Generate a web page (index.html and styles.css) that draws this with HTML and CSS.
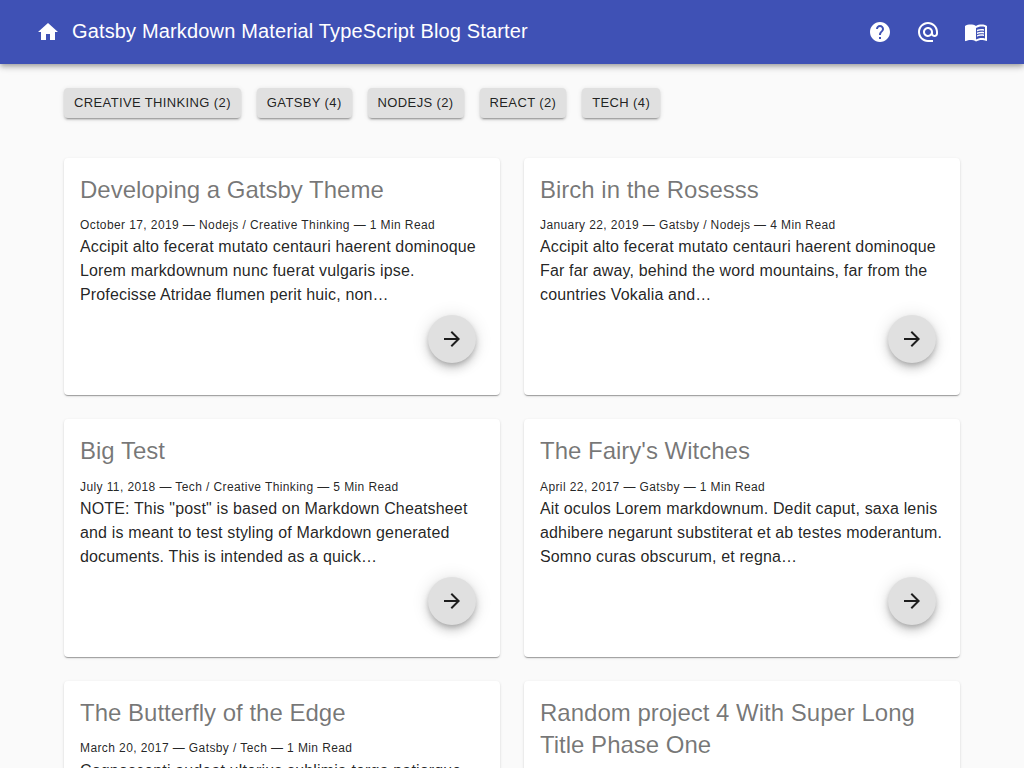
FILE: index.html
```html
<!DOCTYPE html>
<html lang="en">
<head>
<meta charset="utf-8">
<title>Gatsby Markdown Material TypeScript Blog Starter</title>
<link rel="stylesheet" href="styles.css">
</head>
<body>
<header class="bar">
  <a class="home"><svg viewBox="0 0 24 24"><path d="M10 20v-6h4v6h5v-8h3L12 3 2 12h3v8z"/></svg></a>
  <h1 class="brand">Gatsby Markdown Material TypeScript Blog Starter</h1>
  <nav class="actions">
    <svg viewBox="0 0 24 24"><path d="M12 2C6.48 2 2 6.48 2 12s4.48 10 10 10 10-4.48 10-10S17.52 2 12 2zm1 17h-2v-2h2v2zm2.07-7.75l-.9.92C13.45 12.9 13 13.5 13 15h-2v-.5c0-1.1.45-2.1 1.17-2.83l1.24-1.26c.37-.36.59-.86.59-1.41 0-1.1-.9-2-2-2s-2 .9-2 2H8c0-2.21 1.79-4 4-4s4 1.79 4 4c0 .88-.36 1.68-.93 2.25z"/></svg>
    <svg viewBox="0 0 24 24"><path d="M12 1.95c-5.52 0-10 4.48-10 10s4.48 10 10 10h5v-2h-5c-4.34 0-8-3.66-8-8s3.66-8 8-8 8 3.66 8 8v1.43c0 .79-.71 1.57-1.5 1.57s-1.5-.78-1.5-1.57v-1.43c0-2.76-2.24-5-5-5s-5 2.24-5 5 2.24 5 5 5c1.38 0 2.64-.56 3.54-1.47.65.89 1.77 1.47 2.96 1.47 1.97 0 3.5-1.6 3.5-3.57v-1.43c0-5.52-4.48-10-10-10zm0 13c-1.66 0-3-1.34-3-3s1.34-3 3-3 3 1.34 3 3-1.34 3-3 3z"/></svg>
    <svg viewBox="0 0 24 24"><path d="M21 5c-1.11-.35-2.33-.5-3.5-.5-1.95 0-4.05.4-5.5 1.5-1.45-1.1-3.55-1.5-5.5-1.5S2.45 4.9 1 6v14.65c0 .25.25.5.5.5.1 0 .15-.05.25-.05C3.1 20.45 5.05 20 6.5 20c1.95 0 4.05.4 5.5 1.5 1.35-.85 3.8-1.5 5.5-1.5 1.65 0 3.35.3 4.75 1.05.1.05.15.05.25.05.25 0 .5-.25.5-.5V6c-.6-.45-1.25-.75-2-1zm0 13.5c-1.1-.35-2.3-.5-3.5-.5-1.7 0-4.15.65-5.5 1.5V8c1.35-.85 3.8-1.5 5.5-1.5 1.2 0 2.4.15 3.5.5v11.5z"/><path d="M17.5 10.5c.88 0 1.73.09 2.5.26V9.24c-.79-.15-1.64-.24-2.5-.24-1.7 0-3.24.29-4.5.83v1.66c1.13-.64 2.7-.99 4.5-.99zM13 12.49v1.66c1.13-.64 2.7-.99 4.5-.99.88 0 1.73.09 2.5.26V11.9c-.79-.15-1.64-.24-2.5-.24-1.7 0-3.24.3-4.5.83zM17.5 14.33c-1.7 0-3.24.29-4.5.83v1.66c1.13-.64 2.7-.99 4.5-.99.88 0 1.73.09 2.5.26v-1.52c-.79-.16-1.64-.24-2.5-.24z"/></svg>
  </nav>
</header>
<main class="content">
  <div class="tags">
    <a class="tag">Creative Thinking (2)</a><a class="tag">Gatsby (4)</a><a class="tag">Nodejs (2)</a><a class="tag">React (2)</a><a class="tag">Tech (4)</a>
  </div>
  <div class="grid">
    <article class="card"><h2>Developing a Gatsby Theme</h2><p class="meta">October 17, 2019 — Nodejs / Creative Thinking — 1 Min Read</p><p class="text">Accipit alto fecerat mutato centauri haerent dominoque<br>Lorem markdownum nunc fuerat vulgaris ipse.<br>Profecisse Atridae flumen perit huic, non…</p><a class="fab"><svg viewBox="0 0 24 24"><path d="M12 4l-1.41 1.41L16.17 11H4v2h12.17l-5.58 5.59L12 20l8-8z"/></svg></a></article>
    <article class="card"><h2>Birch in the Rosesss</h2><p class="meta">January 22, 2019 — Gatsby / Nodejs — 4 Min Read</p><p class="text">Accipit alto fecerat mutato centauri haerent dominoque<br>Far far away, behind the word mountains, far from the<br>countries Vokalia and…</p><a class="fab"><svg viewBox="0 0 24 24"><path d="M12 4l-1.41 1.41L16.17 11H4v2h12.17l-5.58 5.59L12 20l8-8z"/></svg></a></article>
    <article class="card"><h2>Big Test</h2><p class="meta">July 11, 2018 — Tech / Creative Thinking — 5 Min Read</p><p class="text">NOTE: This "post" is based on Markdown Cheatsheet<br>and is meant to test styling of Markdown generated<br>documents. This is intended as a quick…</p><a class="fab"><svg viewBox="0 0 24 24"><path d="M12 4l-1.41 1.41L16.17 11H4v2h12.17l-5.58 5.59L12 20l8-8z"/></svg></a></article>
    <article class="card"><h2>The Fairy's Witches</h2><p class="meta">April 22, 2017 — Gatsby — 1 Min Read</p><p class="text">Ait oculos Lorem markdownum. Dedit caput, saxa lenis<br>adhibere negarunt substiterat et ab testes moderantum.<br>Somno curas obscurum, et regna…</p><a class="fab"><svg viewBox="0 0 24 24"><path d="M12 4l-1.41 1.41L16.17 11H4v2h12.17l-5.58 5.59L12 20l8-8z"/></svg></a></article>
    <article class="card"><h2>The Butterfly of the Edge</h2><p class="meta">March 20, 2017 — Gatsby / Tech — 1 Min Read</p><p class="text">Cognoscenti audeat ulterius sublimia terga patiorque</p></article>
    <article class="card"><h2>Random project 4 With Super Long<br>Title Phase One</h2></article>
  </div>
</main>
</body>
</html>
```
FILE: styles.css
```css
* { box-sizing: border-box; }
html, body { height: 100%; overflow: hidden; }
body { margin: 0; background: #fafafa; color: rgba(0,0,0,.87); font-family: "Liberation Sans", Arial, sans-serif; }
svg { display: block; width: 24px; height: 24px; fill: currentColor; }
.bar { position: relative; height: 64px; padding: 0 36px; display: flex; align-items: center; background: #3f51b5; color: #fff; box-shadow: 0 2px 4px -1px rgba(0,0,0,.2), 0 4px 5px rgba(0,0,0,.14), 0 1px 10px rgba(0,0,0,.12); }
.brand { margin: 0 0 2px 12px; font-size: 20px; line-height: 32px; font-weight: 400; letter-spacing: .15px; white-space: nowrap; }
.actions { margin-left: auto; display: flex; gap: 24px; }
.content { padding: 24px 64px 0; }
.tags { display: flex; gap: 16px; height: 30px; }
.tag { height: 30px; padding: 0 10px; border-radius: 4px; background: #e0e0e0; font-size: 13px; line-height: 30px; letter-spacing: .02857em; text-transform: uppercase; white-space: nowrap; box-shadow: 0 3px 1px -2px rgba(0,0,0,.2), 0 2px 2px rgba(0,0,0,.14), 0 1px 5px rgba(0,0,0,.12); }
.grid { margin-top: 39.5px; display: grid; grid-template-columns: 436px 436px; grid-auto-rows: 237.8px; gap: 24px; }
.card { padding: 16px; background: #fff; border-radius: 4px; white-space: nowrap; box-shadow: 0 2px 1px -1px rgba(0,0,0,.2), 0 1px 1px rgba(0,0,0,.14), 0 1px 3px rgba(0,0,0,.12); }
.card h2 { margin: 0 0 7.3px; color: rgba(0,0,0,.54); font-size: 24px; line-height: 32px; font-weight: 400; }
.meta { margin: 0 0 -1.7px; font-size: 12px; line-height: 24px; letter-spacing: .4px; }
.text { margin: 0; font-size: 16px; line-height: 24px; letter-spacing: .15px; }
.fab { margin: 8px 8px 0 auto; width: 48px; height: 48px; border-radius: 50%; background: #e0e0e0; display: flex; align-items: center; justify-content: center; box-shadow: 0 3px 5px -1px rgba(0,0,0,.2), 0 6px 10px rgba(0,0,0,.14), 0 1px 18px rgba(0,0,0,.12); }
```
